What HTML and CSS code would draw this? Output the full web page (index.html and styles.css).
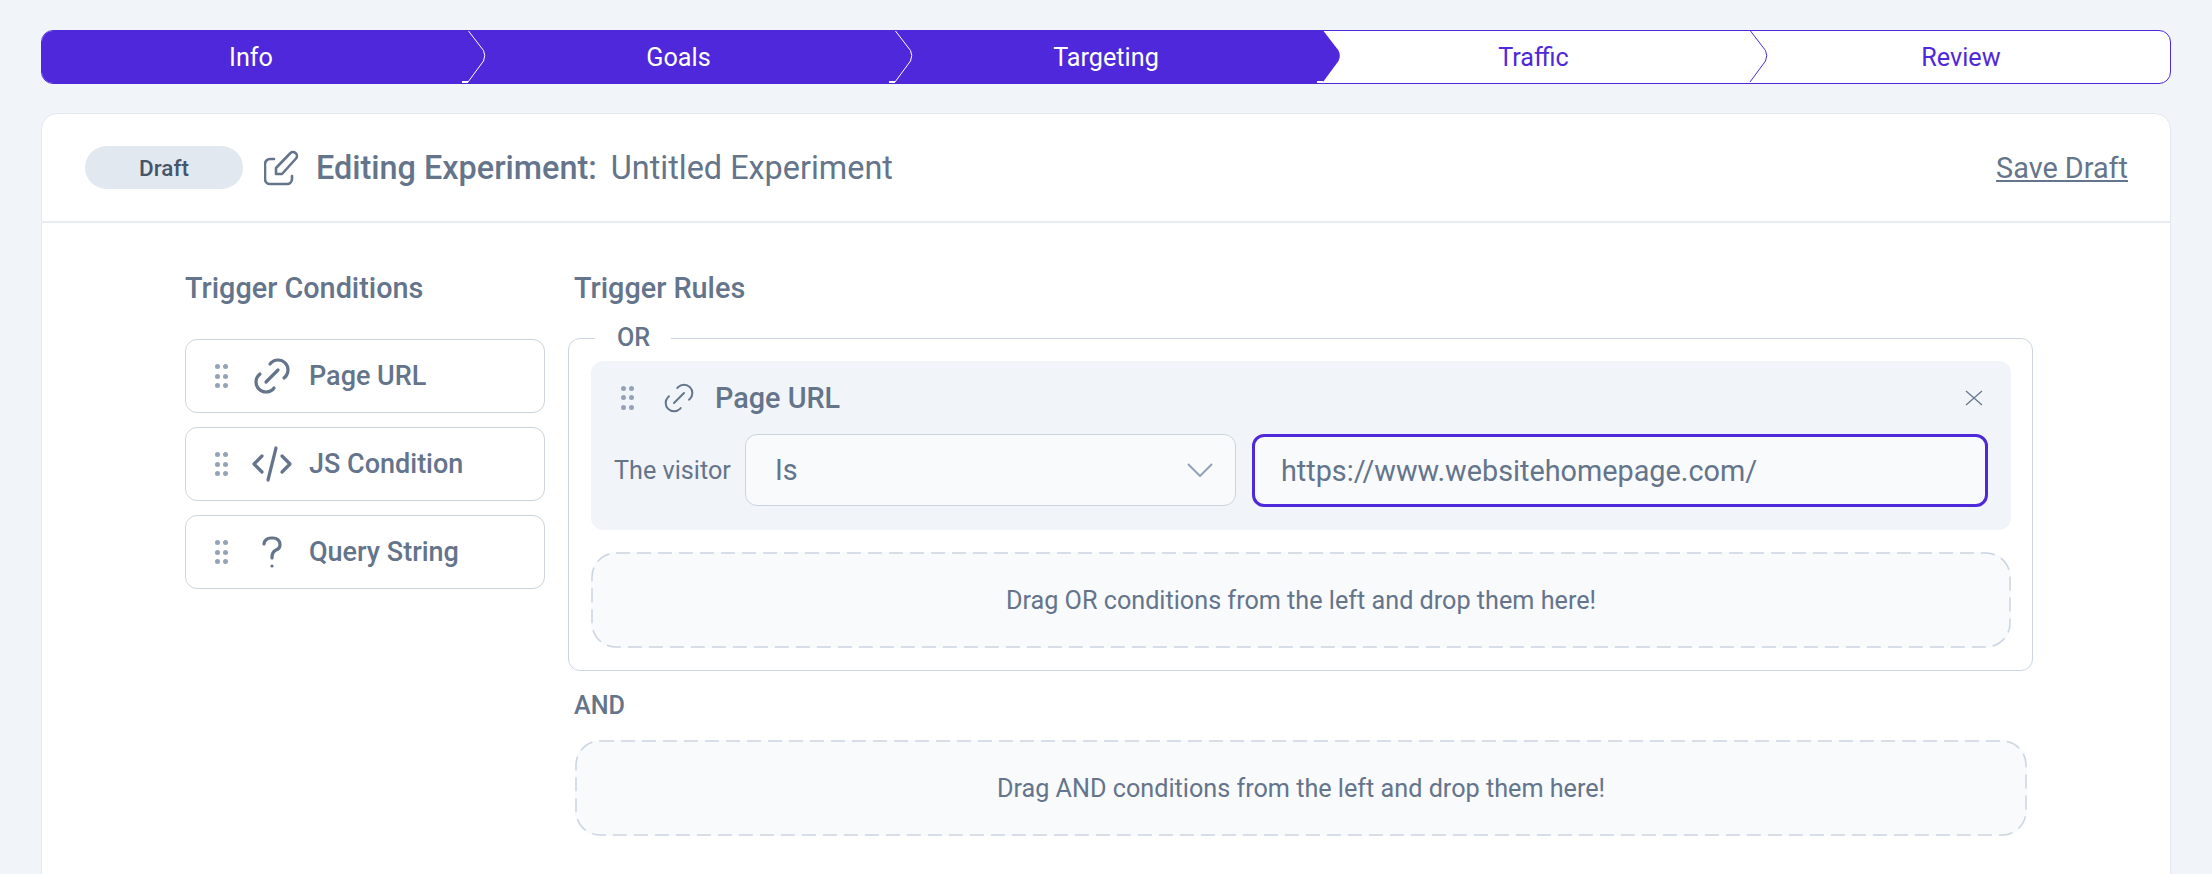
FILE: index.html
```html
<!DOCTYPE html>
<html lang="en">
<head>
  <meta charset="UTF-8">
  <title>Editing Experiment</title>
  <link rel="stylesheet" href="styles.css">
</head>
<body>
  <!-- Steps -->
  <div class="steps">
    <div class="step done">
      <span>Info</span>
      <svg class="step-arrow" viewBox="0 0 30 52"><path class="arrow-line" d="M9.5 0L24.5 19.5Q27 24.5 24.5 30L9 51"/><path class="arrow-notch" d="M3 51H9"/></svg>
    </div>
    <div class="step done">
      <span>Goals</span>
      <svg class="step-arrow" viewBox="0 0 30 52"><path class="arrow-line" d="M9.5 0L24.5 19.5Q27 24.5 24.5 30L9 51"/><path class="arrow-notch" d="M3 51H9"/></svg>
    </div>
    <div class="step active">
      <span>Targeting</span>
      <svg class="step-arrow" viewBox="0 0 30 52"><path class="arrow-fill" d="M0 0H9.5L24.5 19.5Q27 24.5 24.5 30L9 51H0z"/><path class="arrow-notch" d="M3 51H9"/></svg>
    </div>
    <div class="step">
      <span>Traffic</span>
      <svg class="step-arrow" viewBox="0 0 30 52"><path class="arrow-line" d="M9.5 0L24.5 19.5Q27 24.5 24.5 30L9 51"/></svg>
    </div>
    <div class="step">
      <span>Review</span>
    </div>
  </div>

  <div class="card">
    <!-- Card Header -->
    <div class="card-header">
      <span class="badge">Draft</span>
      <svg class="edit-icon" viewBox="0 0 36 36"><path d="M10 9H6a5 5 0 0 0-5 5v15a5 5 0 0 0 5 5h17a5 5 0 0 0 5-5v-3"/><path d="M12 24v-6L26 3.5a3.5 3.5 0 0 1 6 5L18 24z"/></svg>
      <h1 class="title"><b>Editing Experiment:</b> <span>Untitled Experiment</span></h1>
      <a class="save-draft" href="#">Save Draft</a>
    </div>

    <div class="card-body">
      <!-- Conditions -->
      <div class="conditions">
        <h2>Trigger Conditions</h2>
        <div class="condition">
          <div class="dots"><i></i><i></i><i></i><i></i><i></i><i></i></div>
          <svg class="icon" viewBox="0 0 24 24"><path d="M9 15l6-6"/><path d="M11 6l.463-.536a5 5 0 0 1 7.071 7.072l-.534.464"/><path d="M13 18l-.397.534a5.068 5.068 0 0 1-7.127 0a4.972 4.972 0 0 1 0-7.071l.524-.463"/></svg>
          <span>Page URL</span>
        </div>
        <div class="condition">
          <div class="dots"><i></i><i></i><i></i><i></i><i></i><i></i></div>
          <svg class="icon" viewBox="0 0 24 24"><path d="M7 8l-4 4 4 4"/><path d="M17 8l4 4-4 4"/><path d="M14 4l-4 16"/></svg>
          <span>JS Condition</span>
        </div>
        <div class="condition">
          <div class="dots"><i></i><i></i><i></i><i></i><i></i><i></i></div>
          <svg class="icon" viewBox="0 0 24 24"><path d="M8 8a3.5 3 0 0 1 3.5-3h1a3.5 3 0 0 1 3.5 3a3 3 0 0 1-2 3a3 4 0 0 0-2 4"/><path d="M12 19v.01"/></svg>
          <span>Query String</span>
        </div>
      </div>

      <!-- Rules -->
      <div class="rules">
        <h2>Trigger Rules</h2>
        <fieldset class="or-group">
          <legend>OR</legend>
          <div class="rule">
            <div class="rule-top">
              <div class="dots"><i></i><i></i><i></i><i></i><i></i><i></i></div>
              <svg class="icon thin" viewBox="0 0 24 24"><path d="M9 15l6-6"/><path d="M11 6l.463-.536a5 5 0 0 1 7.071 7.072l-.534.464"/><path d="M13 18l-.397.534a5.068 5.068 0 0 1-7.127 0a4.972 4.972 0 0 1 0-7.071l.524-.463"/></svg>
              <span class="rule-name">Page URL</span>
              <svg class="close" viewBox="0 0 18 16"><path d="M1 1l16 14M17 1L1 15"/></svg>
            </div>
            <div class="rule-row">
              <span class="rule-label">The visitor</span>
              <div class="select">
                <span>Is</span>
                <svg viewBox="0 0 26 14"><path d="M1 1l12 12L25 1"/></svg>
              </div>
              <input class="url-input" type="text" value="https://www.websitehomepage.com/">
            </div>
          </div>
          <div class="dropzone">
            <svg class="dash"><rect x="1" y="1" rx="24"/></svg>
            <span>Drag OR conditions from the left and drop them here!</span>
          </div>
        </fieldset>

        <div class="and-label">AND</div>
        <div class="dropzone">
          <svg class="dash"><rect x="1" y="1" rx="24"/></svg>
          <span>Drag AND conditions from the left and drop them here!</span>
        </div>
      </div>
    </div>
  </div>
</body>
</html>
```

FILE: styles.css
```css
* {
  box-sizing: border-box;
}

html, body {
  height: 874px;
  overflow: hidden;
}

body {
  margin: 0;
  padding: 30px 41px 0;
  background: #f1f5f9;
  font-family: Roboto, "Liberation Sans", sans-serif;
  color: #64748b;
}

h1, h2 {
  margin: 0;
}

/* Steps */
.steps {
  display: flex;
  justify-content: center;
  height: 54px;
  background: #fff;
  border: 1px solid #4f28dc;
  border-radius: 12px;
  overflow: hidden;
}

.step {
  position: relative;
  display: flex;
  align-items: center;
  justify-content: center;
  flex: none;
  width: 427.5px;
  font-size: 25.2px;
  color: #4f28dc;
}

.step.done, .step.active {
  background: #4f28dc;
  color: #fff;
}

.step-arrow {
  position: absolute;
  top: 0;
  right: -24px;
  z-index: 1;
  width: 30px;
  height: 52px;
}

.arrow-line {
  fill: none;
  stroke: #4f28dc;
  stroke-width: 1;
}

.done .arrow-line {
  stroke: #fff;
}

.arrow-fill {
  fill: #4f28dc;
}

.arrow-notch {
  stroke: #fff;
  stroke-width: 2;
}

/* Card */
.card {
  margin-top: 29px;
  height: 800px;
  background: #fff;
  border: 1px solid #e2e8f0;
  border-radius: 16px;
}

.card-header {
  display: flex;
  align-items: center;
  height: 109px;
  padding: 0 42px 0 43px;
  border-bottom: 2px solid #e8ecf2;
}

.badge {
  display: flex;
  align-items: center;
  justify-content: center;
  width: 158px;
  height: 43px;
  border-radius: 22px;
  background: #e2e8f0;
  color: #475569;
  font-size: 22.5px;
  font-weight: 500;
}

.edit-icon {
  flex-shrink: 0;
  width: 36px;
  height: 36px;
  margin-left: 21px;
  fill: none;
  stroke: #64748b;
  stroke-width: 2.6;
  stroke-linecap: round;
  stroke-linejoin: round;
}

.title {
  margin-left: 16px;
  font-size: 32.4px;
  font-weight: 400;
}

.title b {
  font-weight: 500;
  margin-right: 6px;
}

.save-draft {
  margin-left: auto;
  font-size: 28.8px;
  color: #64748b;
}

.card-body {
  display: flex;
  gap: 30px;
  padding: 48px 143px 0;
}

.conditions {
  width: 360px;
}

.rules {
  flex: 1;
}

h2 {
  font-size: 28.8px;
  font-weight: 500;
  line-height: 34px;
}

.conditions h2 {
  margin-bottom: 34px;
}

.rules h2 {
  margin: 0 0 19px -1px;
}

/* Conditions */
.condition {
  display: flex;
  align-items: center;
  height: 74px;
  margin-bottom: 14px;
  padding-left: 29px;
  border: 1px solid #cbd5e1;
  border-radius: 12px;
  font-size: 27px;
  font-weight: 500;
}

.dots {
  display: grid;
  grid-template-columns: 5px 5px;
  gap: 4.5px 3px;
  flex-shrink: 0;
}

.dots i {
  width: 5px;
  height: 5px;
  border-radius: 50%;
  background: #94a3b8;
}

.icon {
  flex-shrink: 0;
  width: 48px;
  height: 48px;
  margin: 0 13px 0 20px;
  fill: none;
  stroke: #64748b;
  stroke-width: 1.6;
  stroke-linecap: round;
  stroke-linejoin: round;
}

.icon.thin {
  width: 40px;
  height: 40px;
  margin: 0 16px 0 25px;
  stroke-width: 1.2;
}

/* Rule box */
.or-group {
  margin: 0 -6px 0 -7px;
  padding: 0 21px 22px 22px;
  min-width: 0;
  border: 1px solid #cbd5e1;
  border-radius: 12px;
}

.or-group legend {
  margin-left: 4px;
  padding: 0 21px 0 22px;
  font-size: 25.2px;
  font-weight: 500;
  line-height: 28px;
}

.rule {
  height: 169px;
  margin: 9px 0 22px;
  padding: 0 23px 0 30px;
  background: #f1f5f9;
  border-radius: 12px;
}

.rule-top {
  display: flex;
  align-items: center;
  height: 73px;
}

.rule-name {
  font-size: 28.8px;
  font-weight: 500;
}

.close {
  width: 18px;
  height: 16px;
  margin-left: auto;
  margin-right: 5px;
  fill: none;
  stroke: #64748b;
  stroke-width: 1.2;
}

.rule-row {
  display: flex;
  align-items: flex-start;
  margin-left: -7px;
}

.rule-label {
  align-self: center;
  width: 131px;
  font-size: 25.2px;
}

.select {
  display: flex;
  align-items: center;
  justify-content: space-between;
  flex: none;
  width: 491px;
  height: 72px;
  padding: 0 22px 0 29px;
  background: #f8fafc;
  border: 1px solid #cbd5e1;
  border-radius: 12px;
  font-size: 28.8px;
}

.select svg {
  width: 26px;
  height: 14px;
  fill: none;
  stroke: #94a3b8;
  stroke-width: 2;
}

.url-input {
  flex: 1;
  min-width: 0;
  height: 73px;
  margin-left: 16px;
  padding: 0 26px;
  background: #f8fafc;
  border: 3px solid #4f28dc;
  border-radius: 12px;
  outline: none;
  font-family: inherit;
  font-size: 28.8px;
  color: #64748b;
}

/* Drop zones */
.dropzone {
  position: relative;
  display: flex;
  align-items: center;
  justify-content: center;
  height: 96px;
  background: #f8fafc;
  border-radius: 24px;
  font-size: 25.2px;
}

.dash {
  position: absolute;
  top: 0;
  left: 0;
  width: 100%;
  height: 100%;
}

.dash rect {
  width: calc(100% - 2px);
  height: calc(100% - 2px);
  fill: none;
  stroke: #cbd5e1;
  stroke-width: 1.5;
  stroke-dasharray: 14 7;
}

.and-label {
  margin: 23px 0 22px -1px;
  font-size: 25.2px;
  font-weight: 500;
  line-height: 24px;
}
```
